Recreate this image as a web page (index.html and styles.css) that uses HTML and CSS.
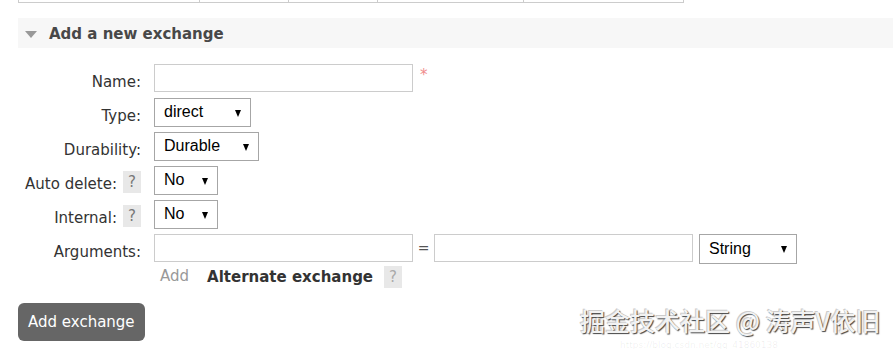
FILE: index.html
```html
<!DOCTYPE html>
<html lang="en">
<head>
  <meta charset="UTF-8" />
  <meta name="viewport" content="width=device-width, initial-scale=1" />
  <title>Exchanges</title>
  <link rel="stylesheet" href="styles.css">
</head>
<body>
  <div class="table-stub">
    <span class="cell c1"></span>
    <span class="cell c2"></span>
    <span class="cell c3"></span>
    <span class="cell c4"></span>
    <span class="cell c5"></span>
  </div>

  <div class="section">
    <h2 class="section-title"><span class="toggle"></span>Add a new exchange</h2>

    <form class="exchange-form">
      <div class="row">
        <label class="field-label" for="name">Name:</label>
        <input type="text" id="name" class="text-input" />
        <span class="required">*</span>
      </div>

      <div class="row">
        <label class="field-label" for="type">Type:</label>
        <span class="select-wrap"><select id="type" class="sel sel-type"><option>direct</option></select></span>
      </div>

      <div class="row">
        <label class="field-label" for="durable">Durability:</label>
        <span class="select-wrap"><select id="durable" class="sel sel-durable"><option>Durable</option></select></span>
      </div>

      <div class="row">
        <label class="field-label" for="autodelete">Auto delete: <span class="help">?</span></label>
        <span class="select-wrap"><select id="autodelete" class="sel sel-bool"><option>No</option></select></span>
      </div>

      <div class="row">
        <label class="field-label" for="internal">Internal: <span class="help">?</span></label>
        <span class="select-wrap"><select id="internal" class="sel sel-bool"><option>No</option></select></span>
      </div>

      <div class="row">
        <label class="field-label" for="argkey">Arguments:</label>
        <input type="text" id="argkey" class="text-input" />
        <span class="equals">=</span>
        <input type="text" class="text-input" />
        <span class="select-wrap arg-type"><select class="sel sel-string"><option>String</option></select></span>
      </div>

      <div class="row-add">
        <span class="add-link">Add</span>
        <span class="alt-label">Alternate exchange</span>
        <span class="help">?</span>
      </div>

      <button type="submit" class="btn">Add exchange</button>
    </form>
  </div>

  <div class="watermark">
    <span class="wm-main">掘金技术社区 @ 涛声V依旧</span>
    <span class="wm-url">https://blog.csdn.net/qq_41860138</span>
  </div>
</body>
</html>
```

FILE: styles.css
```css
body {
  margin: 0;
  font-family: "DejaVu Sans", Verdana, sans-serif;
  font-size: 15px;
  color: #333;
  background: #fff;
  position: relative;
  height: 349px;
  overflow: hidden;
}
.table-stub {
  display: flex;
  margin-left: 18px;
  height: 3px;
}
.cell {
  border-left: 1px solid #ccc;
  border-bottom: 1px solid #ccc;
}
.c1 { width: 180px; }
.c2 { width: 88px; }
.c3 { width: 88px; }
.c4 { width: 145px; }
.c5 { width: 159px; border-right: 1px solid #ccc; }

.section {
  margin-left: 18px;
  margin-top: 15px;
}
.section-title {
  margin: 0;
  height: 30px;
  line-height: 30px;
  background: #f7f7f7;
  font-size: 15px;
  font-weight: 700;
  color: #484848;
  display: flex;
  align-items: center;
  padding-left: 7px;
  padding-top: 1px;
  box-sizing: border-box;
}
.toggle {
  width: 0;
  height: 0;
  border-left: 6.5px solid transparent;
  border-right: 6.5px solid transparent;
  border-top: 7px solid #999;
  margin-right: 12px;
  margin-top: 2px;
}

.exchange-form {
  padding-top: 13px;
}
.row {
  display: flex;
  align-items: center;
  height: 34px;
}
.field-label {
  width: 123px;
  display: flex;
  justify-content: flex-end;
  align-items: center;
  gap: 6px;
  margin-right: 13px;
  padding-top: 7px;
  white-space: nowrap;
}
.help {
  display: inline-flex;
  align-items: center;
  justify-content: center;
  width: 18px;
  height: 22px;
  background: #e8e8e8;
  color: #777;
  font-size: 15px;
}
.field-label .help {
  margin-top: -3px;
}
.text-input {
  width: 259px;
  height: 28px;
  box-sizing: border-box;
  border: 1px solid #ccc;
  margin: 0;
  padding: 0 6px;
  font-size: 15px;
}
.required {
  align-self: flex-start;
  color: #f08c8c;
  font-size: 15px;
  margin: 5px 0 0 7px;
}
.select-wrap {
  position: relative;
  display: inline-block;
}
.select-wrap::after {
  content: "";
  position: absolute;
  right: 10px;
  top: 12px;
  border-left: 3.5px solid transparent;
  border-right: 3.5px solid transparent;
  border-top: 7px solid #000;
  pointer-events: none;
}
.sel {
  -webkit-appearance: none;
  appearance: none;
  height: 29px;
  box-sizing: border-box;
  border: 1px solid #a6a6a6;
  border-radius: 0;
  background: #fff;
  color: #000;
  font-family: "Liberation Sans", Arial, sans-serif;
  font-size: 16px;
  padding: 0 0 2px 9px;
  margin: 0;
}
.sel-type { width: 97px; }
.sel-durable { width: 105px; }
.sel-bool { width: 64px; }
.sel-string { width: 98px; height: 30px; }
.equals {
  width: 21px;
  text-align: center;
  color: #555;
  font-size: 14px;
}
.arg-type {
  margin-left: 6px;
  margin-top: 2px;
}

.row-add {
  display: flex;
  align-items: center;
  height: 24px;
  margin-left: 142px;
}
.add-link {
  color: #999;
  margin-right: 18px;
  margin-bottom: 3px;
}
.alt-label {
  font-weight: 700;
  color: #333;
  margin-right: 11px;
}
.row-add .help {
  color: #aaa;
}

.btn {
  margin-top: 14px;
  height: 38px;
  padding: 0 10px;
  background: #666;
  color: #fff;
  border: none;
  border-radius: 6px;
  font-family: "DejaVu Sans", Verdana, sans-serif;
  font-size: 15px;
  cursor: pointer;
}

.watermark {
  position: absolute;
  left: 580px;
  top: 305px;
  width: 313px;
  height: 44px;
}
.wm-main {
  position: absolute;
  left: 0;
  top: 0;
  font-family: "Noto Sans CJK SC", sans-serif;
  font-size: 25px;
  font-weight: 500;
  line-height: 30px;
  color: #f2f2f2;
  text-shadow: 1px 1px 1px #444, -1px -1px 0 #ccc;
  white-space: nowrap;
}
.wm-url {
  position: absolute;
  left: 40px;
  top: 36px;
  font-family: "DejaVu Sans", sans-serif;
  font-size: 9px;
  line-height: 9px;
  color: rgba(0, 0, 0, 0.07);
  white-space: nowrap;
}
```
